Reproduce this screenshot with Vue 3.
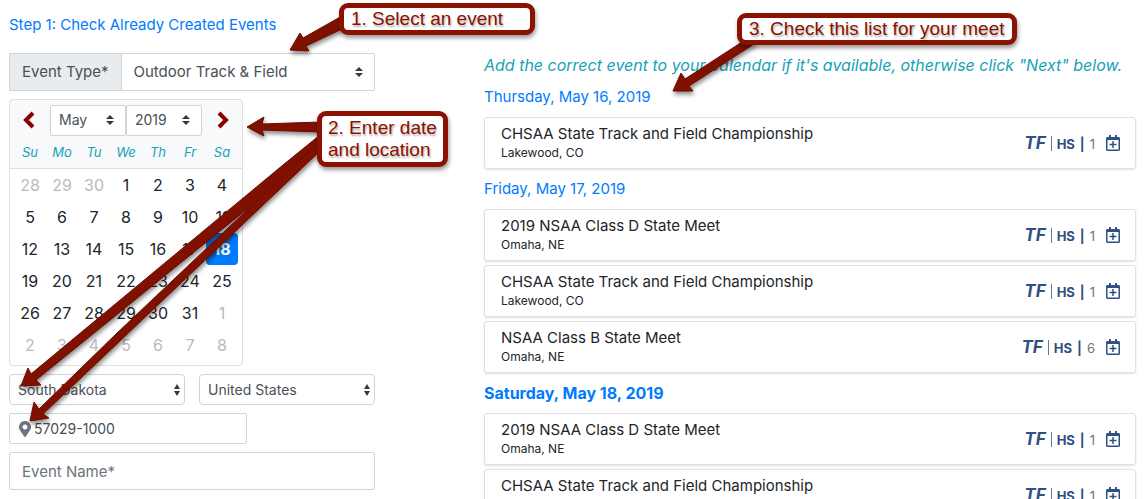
<script setup>
import { ref } from 'vue'

const eventType = ref('Outdoor Track & Field')
const month = ref('May')
const year = ref('2019')
const region = ref('South Dakota')
const country = ref('United States')
const zip = ref('57029-1000')
const eventName = ref('')
const selected = ref(20)

const weekdays = ['Su', 'Mo', 'Tu', 'We', 'Th', 'Fr', 'Sa']
const weeks = Array.from({ length: 6 }, (_, w) =>
  Array.from({ length: 7 }, (_, d) => {
    const index = w * 7 + d
    const date = new Date(2019, 3, 28 + index)
    return { index, label: date.getDate(), outside: date.getMonth() !== 4 }
  })
)

const classD = { name: '2019 NSAA Class D State Meet', place: 'Omaha, NE', count: 1 }
const chsaa = { name: 'CHSAA State Track and Field Championship', place: 'Lakewood, CO', count: 1 }
const classB = { name: 'NSAA Class B State Meet', place: 'Omaha, NE', count: 6 }
const groups = [
  { date: 'Thursday, May 16, 2019', meets: [chsaa] },
  { date: 'Friday, May 17, 2019', meets: [classD, chsaa, classB] },
  { date: 'Saturday, May 18, 2019', current: true, meets: [classD, chsaa] },
]
</script>

<template>
  <main class="page">
    <section class="form">
      <h1 class="step">Step 1: Check Already Created Events</h1>

      <div class="group">
        <label class="addon" for="type">Event Type*</label>
        <div class="pick grow">
          <select id="type" v-model="eventType" class="field large"><option>Outdoor Track &amp; Field</option></select>
          <svg class="caret" viewBox="0 0 4 5" width="8" height="10"><path d="M2 0L0 2h4zm0 5L0 3h4z" /></svg>
        </div>
      </div>

      <div class="calendar">
        <div class="cal-nav">
          <button class="nav" aria-label="Previous month"><svg viewBox="0 0 12 18" width="12" height="18"><path d="M10 2L3 9l7 7" /></svg></button>
          <div class="pick grow">
            <select v-model="month" class="field small" aria-label="Month"><option>May</option></select>
            <svg class="caret" viewBox="0 0 4 5" width="8" height="10"><path d="M2 0L0 2h4zm0 5L0 3h4z" /></svg>
          </div>
          <div class="pick grow">
            <select v-model="year" class="field small" aria-label="Year"><option>2019</option></select>
            <svg class="caret" viewBox="0 0 4 5" width="8" height="10"><path d="M2 0L0 2h4zm0 5L0 3h4z" /></svg>
          </div>
          <button class="nav next" aria-label="Next month"><svg viewBox="0 0 12 18" width="12" height="18"><path d="M2 2l7 7-7 7" /></svg></button>
        </div>
        <table class="days">
          <thead>
            <tr><th v-for="d in weekdays" :key="d">{{ d }}</th></tr>
          </thead>
          <tbody>
            <tr v-for="(week, i) in weeks" :key="i">
              <td v-for="day in week" :key="day.index">
                <button class="day" :class="{ outside: day.outside, on: day.index === selected }" @click="selected = day.index">{{ day.label }}</button>
              </td>
            </tr>
          </tbody>
        </table>
      </div>

      <div class="pair">
        <div class="pick">
          <select v-model="region" class="field medium" aria-label="State"><option>South Dakota</option></select>
          <svg class="caret edge" viewBox="0 0 6 12" width="6" height="12"><path d="M3 0L0 5h6zM3 12L0 7h6z" /></svg>
        </div>
        <div class="pick">
          <select v-model="country" class="field medium" aria-label="Country"><option>United States</option></select>
          <svg class="caret edge" viewBox="0 0 6 12" width="6" height="12"><path d="M3 0L0 5h6zM3 12L0 7h6z" /></svg>
        </div>
      </div>

      <label class="zip">
        <svg viewBox="0 0 384 512" width="12" height="16" aria-label="Postal code"><path d="M172.268 501.67C26.97 291.031 0 269.413 0 192 0 85.961 85.961 0 192 0s192 85.961 192 192c0 77.413-26.97 99.031-172.268 309.67-9.535 13.774-29.93 13.773-39.464 0zM192 272c44.183 0 80-35.817 80-80s-35.817-80-80-80-80 35.817-80 80 35.817 80 80 80z" /></svg>
        <input v-model="zip" type="text">
      </label>

      <input v-model="eventName" class="field name" type="text" placeholder="Event Name*" aria-label="Event Name">
    </section>

    <section class="results">
      <p class="tip">Add the correct event to your calendar if it's available, otherwise click "Next" below.</p>
      <div v-for="group in groups" :key="group.date" class="day-group">
        <h2 :class="{ current: group.current }">{{ group.date }}</h2>
        <ul>
          <li v-for="(meet, i) in group.meets" :key="i" class="meet">
            <div class="grow">
              <div class="title">{{ meet.name }}</div>
              <div class="place">{{ meet.place }}</div>
            </div>
            <div class="meta"><em>TF</em><i class="rule"></i><b>HS</b><b>|</b><span>{{ meet.count }}</span></div>
            <button class="add" aria-label="Add to calendar">
              <svg viewBox="0 0 448 512" width="14" height="16"><path d="M336 292v24c0 6.6-5.4 12-12 12h-76v76c0 6.6-5.4 12-12 12h-24c-6.6 0-12-5.4-12-12v-76h-76c-6.6 0-12-5.4-12-12v-24c0-6.6 5.4-12 12-12h76v-76c0-6.6 5.4-12 12-12h24c6.6 0 12 5.4 12 12v76h76c6.6 0 12 5.4 12 12zm112-180v352c0 26.5-21.5 48-48 48H48c-26.5 0-48-21.5-48-48V112c0-26.5 21.5-48 48-48h48V12c0-6.6 5.4-12 12-12h40c6.6 0 12 5.4 12 12v52h128V12c0-6.6 5.4-12 12-12h40c6.6 0 12 5.4 12 12v52h48c26.5 0 48 21.5 48 48zm-48 346V160H48v298c0 3.3 2.7 6 6 6h340c3.3 0 6-2.7 6-6z" /></svg>
            </button>
          </li>
        </ul>
      </div>
    </section>

    <div class="notes">
      <svg class="arrows" width="1144" height="499" viewBox="0 0 1144 499">
        <path d="M290 50L300 33L303 38L342 16V29L306 46L309 51Z" />
        <path d="M247 127L264 117L262 124L320 122V132L262 130L264 136Z" />
        <path d="M21 386L28 368L31 374L78 335L283 165L320 135V150L36 380L41 385Z" />
        <path d="M30 421L34 402L39 409L115 335L320 141V151L43 414L49 418Z" />
        <path d="M673 91L681 73L685 79L742 42H757L689 86L693 91Z" />
      </svg>
      <div class="note first">1. Select an event</div>
      <div class="note second">2. Enter date<br>and location</div>
      <div class="note third">3. Check this list for your meet</div>
    </div>
  </main>
</template>

<style>
html { scrollbar-width: none; background: #fff; }
</style>

<style scoped>
* { box-sizing: border-box; }
.page {
  position: relative;
  display: grid;
  grid-template-columns: 366fr 652fr;
  column-gap: 109px;
  padding: 13px 8px 0 9px;
  height: 100vh;
  overflow: hidden;
  font: 15px/24px Inter, "Noto Sans", sans-serif;
  color: #212529;
}
button, input, select { font: inherit; color: inherit; margin: 0; }
button { border: 0; background: none; padding: 0; cursor: pointer; }
.grow { flex: 1; min-width: 0; }
.form { display: flex; flex-direction: column; gap: 8px; }
.step, h2 { margin: 0; font-size: 15px; line-height: 24px; font-weight: 400; color: #007bff; }
.step { margin-bottom: 8px; }
h2.current { font-size: 16px; font-weight: 700; }

.group { display: flex; }
.addon {
  padding: 6px 12px;
  border: 1px solid #ced4da;
  border-right: 0;
  border-radius: 2px 0 0 2px;
  background: #e9ecef;
  color: #495057;
}
.pick { position: relative; }
.field {
  display: block;
  width: 100%;
  border: 1px solid #ced4da;
  border-radius: 2px;
  background: #fff;
  color: #495057;
  outline: 0;
}
select.field { appearance: none; }
.large { height: 38px; padding: 0 28px 0 12px; border-radius: 0 2px 2px 0; }
.small { height: 31px; padding: 0 20px 0 8px; font-size: 14px; }
.medium { height: 31px; padding: 0 16px 0 8px; font-size: 14px; border-radius: 4px; }
.name { height: 38px; padding: 6px 12px; }
.name::placeholder { color: #6c757d; opacity: 1; }
.caret {
  position: absolute;
  right: 12px;
  top: 50%;
  transform: translateY(-50%);
  fill: #343a40;
  pointer-events: none;
}
.caret.edge { right: 5px; }

.calendar {
  align-self: flex-start;
  border: 1px solid #dfe0e1;
  border-radius: 4px;
  padding-bottom: 4px;
  background: linear-gradient(#f8f9fa 68px, #dfe0e1 68px, #dfe0e1 69px, #fff 69px);
}
.cal-nav { display: flex; align-items: center; height: 36px; padding: 4px 4px 0; }
.nav { display: flex; align-items: center; width: 36px; height: 32px; padding: 0 9px; }
.nav.next { justify-content: flex-end; }
.nav svg { flex: none; fill: none; stroke: #8b0000; stroke-width: 4; }
.days { border-collapse: collapse; margin: 0 4px; }
.days th, .days td { width: 32px; height: 32px; padding: 0; text-align: center; }
.days th { height: 33px; padding-bottom: 1px; font-size: 13px; font-weight: 400; font-style: italic; color: #17a2b8; }
.day { display: block; width: 32px; height: 32px; border-radius: 4px; font-size: 16px; }
.day.outside { color: #b8bbbd; }
.day.on { background: #007bff; color: #fff; font-weight: 700; }

.pair { display: grid; grid-template-columns: 1fr 1fr; gap: 14px; }
.zip {
  display: flex;
  align-items: center;
  gap: 3px;
  width: 65%;
  height: 31px;
  padding: 0 9px;
  border: 1px solid #ced4da;
  border-radius: 2px;
  font-size: 14px;
  color: #495057;
}
.zip svg { fill: #6c757d; flex: none; }
.zip input { border: 0; outline: 0; padding: 0; flex: 1; min-width: 0; background: none; }

.results { padding-top: 40px; min-width: 0; }
.tip { margin: 0; font-size: 16px; font-style: italic; color: #17a2b8; white-space: nowrap; }
.day-group { margin-top: 8px; }
ul { list-style: none; margin: 8px 0 0; padding: 0; display: grid; gap: 4px; }
.meet {
  display: flex;
  align-items: center;
  height: 52px;
  padding: 0 15px 0 16px;
  border: 1px solid #dfe0e1;
  border-radius: 3px;
  box-shadow: 0 1px 2px rgba(0, 0, 0, .12);
}
.title { line-height: 20px; }
.place { font-size: 12px; line-height: 18px; }
.meta { display: flex; align-items: baseline; gap: 5px; color: #2f5182; font-size: 13px; }
.meta em { font-weight: 700; font-size: 17px; }
.meta b { font-weight: 700; }
.meta span { color: #6c757d; }
.rule { align-self: center; width: 1px; height: 15px; background: #5f7aa0; }
.add { margin-left: 11px; height: 16px; line-height: 0; }
.add svg { fill: #2f5182; }

.notes { position: absolute; inset: 0; pointer-events: none; }
.arrows { position: absolute; left: 0; top: 0; filter: drop-shadow(1px 3px 2px rgba(0, 0, 0, .45)); }
.arrows path { fill: #801000; stroke: #6b0c00; stroke-width: 1; stroke-linejoin: round; }
.note {
  position: absolute;
  border: 5px solid #8b1100;
  border-radius: 9px;
  background: #fff;
  color: #8b1100;
  font: 19px/22px "Liberation Sans", Arial, sans-serif;
  white-space: nowrap;
  box-shadow: 1px 3px 4px rgba(0, 0, 0, .4);
  text-shadow: 1px 2px 2px rgba(0, 0, 0, .3);
}
.first { left: 339px; top: 3px; width: 196px; padding: 0 7px; }
.second { left: 317px; top: 111px; padding: 1px 6px; }
.third { left: 737px; top: 13px; padding: 0 7px; }
</style>
